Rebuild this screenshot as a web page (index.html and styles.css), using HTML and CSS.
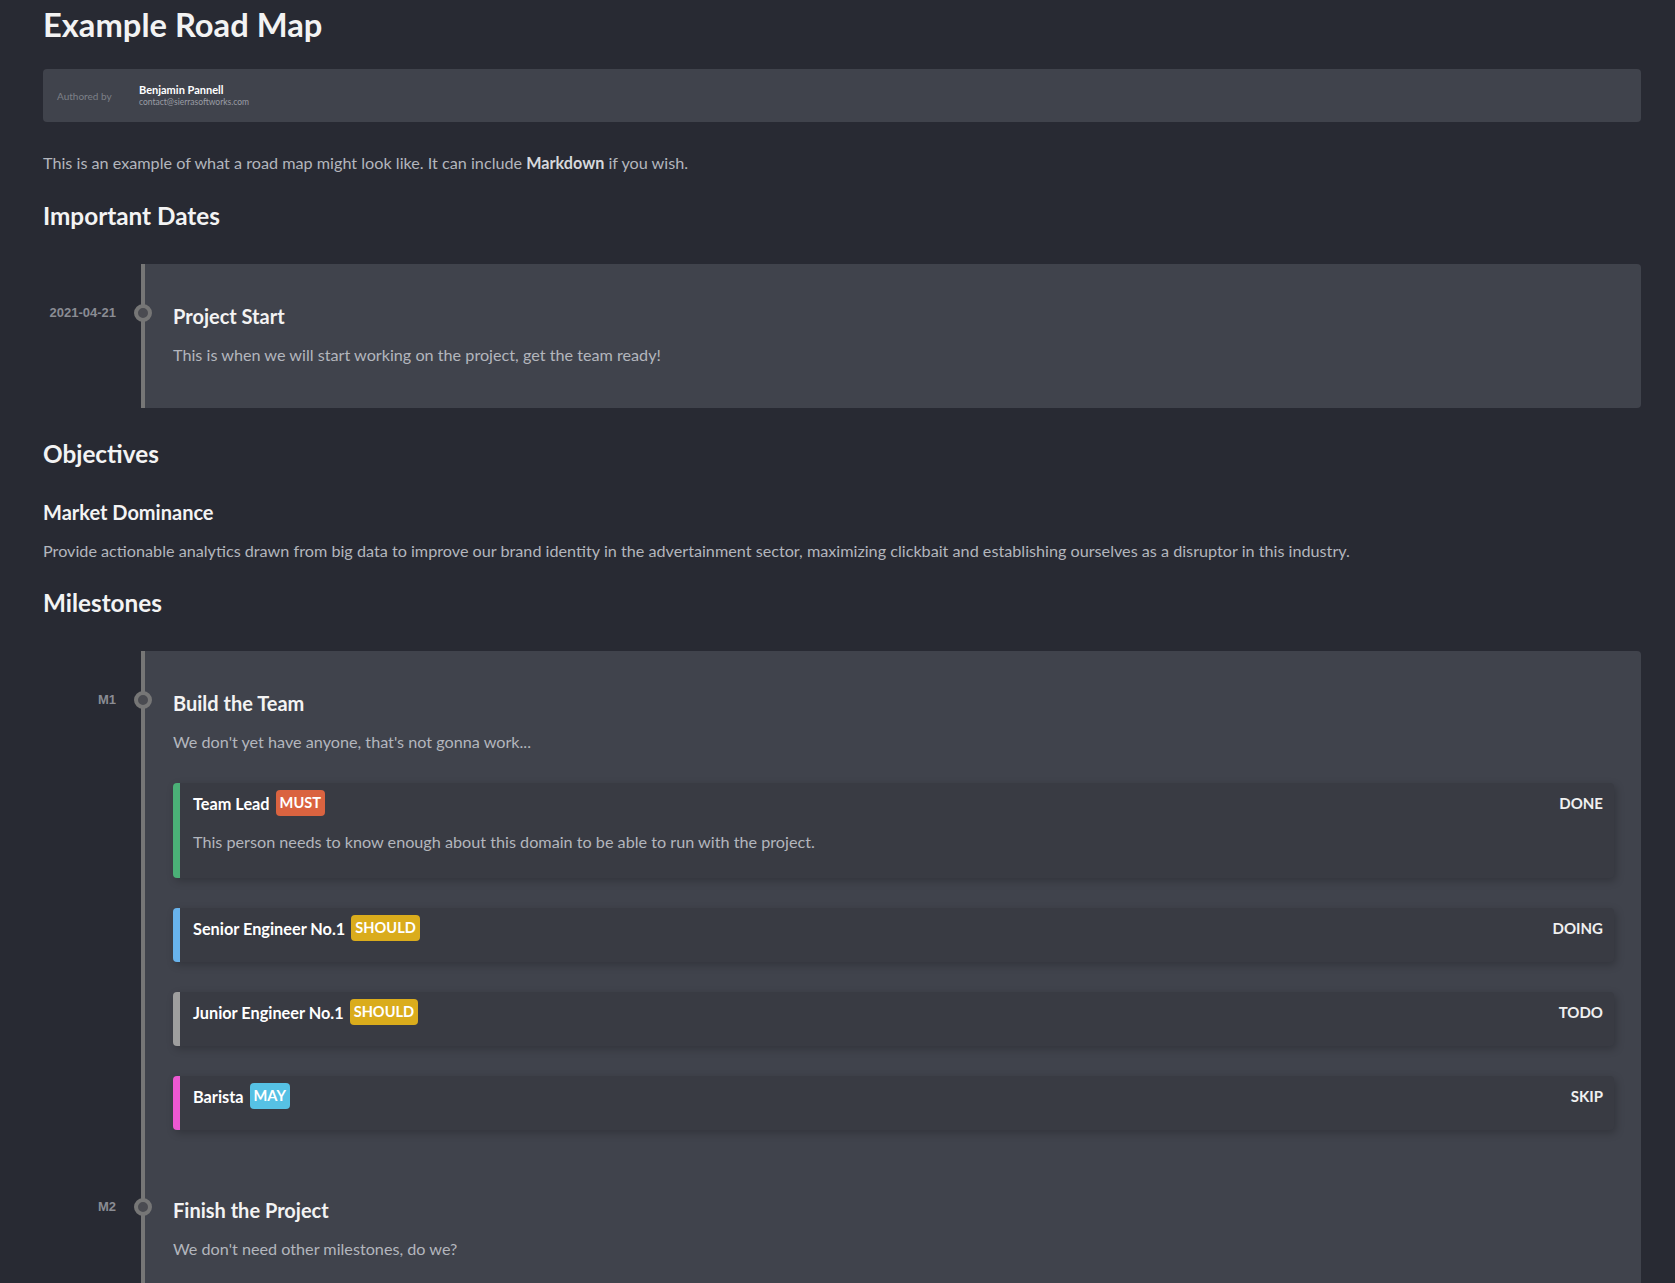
FILE: index.html
```html
<!DOCTYPE html>
<html lang="en">
<head>
<meta charset="utf-8">
<title>Example Road Map</title>
<link rel="stylesheet" href="styles.css">
</head>
<body>
<main class="page">
  <h1 class="title">Example Road Map</h1>

  <div class="authors">
    <div class="authors-label">Authored by</div>
    <div class="author">
      <div class="author-name">Benjamin Pannell</div>
      <div class="author-email">contact@sierrasoftworks.com</div>
    </div>
  </div>

  <p class="intro">This is an example of what a road map might look like. It can include <strong>Markdown</strong> if you wish.</p>

  <h2 class="section-title section-dates">Important Dates</h2>
  <section class="timeline">
    <div class="tl-item">
      <span class="tl-label">2021-04-21</span>
      <span class="tl-dot"></span>
      <h3 class="tl-title">Project Start</h3>
      <p class="tl-desc">This is when we will start working on the project, get the team ready!</p>
    </div>
  </section>

  <h2 class="section-title section-objectives">Objectives</h2>
  <h3 class="objective-title">Market Dominance</h3>
  <p class="objective-desc">Provide actionable analytics drawn from big data to improve our brand identity in the advertainment sector, maximizing clickbait and establishing ourselves as a disruptor in this industry.</p>

  <h2 class="section-title section-milestones">Milestones</h2>
  <section class="timeline">
    <div class="tl-item">
      <span class="tl-label">M1</span>
      <span class="tl-dot"></span>
      <h3 class="tl-title">Build the Team</h3>
      <p class="tl-desc">We don't yet have anyone, that's not gonna work...</p>
      <div class="tasks">
        <div class="task task-done">
          <div class="task-head">
            <div class="task-name">Team Lead <span class="badge badge-must">MUST</span></div>
            <div class="status">DONE</div>
          </div>
          <p class="task-desc">This person needs to know enough about this domain to be able to run with the project.</p>
        </div>
        <div class="task task-doing">
          <div class="task-head">
            <div class="task-name">Senior Engineer No.1 <span class="badge badge-should">SHOULD</span></div>
            <div class="status">DOING</div>
          </div>
        </div>
        <div class="task task-todo">
          <div class="task-head">
            <div class="task-name">Junior Engineer No.1 <span class="badge badge-should">SHOULD</span></div>
            <div class="status">TODO</div>
          </div>
        </div>
        <div class="task task-skip">
          <div class="task-head">
            <div class="task-name">Barista <span class="badge badge-may">MAY</span></div>
            <div class="status">SKIP</div>
          </div>
        </div>
      </div>
    </div>
    <div class="tl-item">
      <span class="tl-label">M2</span>
      <span class="tl-dot"></span>
      <h3 class="tl-title">Finish the Project</h3>
      <p class="tl-desc">We don't need other milestones, do we?</p>
    </div>
  </section>
</main>
</body>
</html>
```

FILE: styles.css
```css
* {
  box-sizing: border-box;
}

html,
body {
  margin: 0;
  background: #282a33;
}

body {
  font-family: Lato, "Segoe UI", "Noto Sans", sans-serif;
  font-size: 16.2px;
  color: #b3b6bd;
}

.page {
  padding: 0 34px 60px 43px;
}

.title {
  margin: 0;
  height: 50px;
  line-height: 50px;
  font-size: 32.7px;
  font-weight: 700;
  color: #f3f3f3;
}

.authors {
  margin-top: 19px;
  height: 53px;
  background: #40434c;
  border-radius: 4px;
  display: flex;
  align-items: center;
  padding-left: 14px;
}

.authors-label {
  width: 82px;
  font-size: 10px;
  color: #7d8088;
}

.author-name {
  font-size: 11px;
  line-height: 13px;
  font-weight: 700;
  color: #ffffff;
}

.author-email {
  font-size: 8.5px;
  line-height: 12px;
  color: #9a9da5;
}

.intro {
  margin: 29px 0 0;
  line-height: 24px;
}

.intro strong {
  color: #d6d8dc;
}

.section-title {
  margin: 0;
  font-size: 24.3px;
  line-height: 30px;
  font-weight: 700;
  color: #f3f3f3;
}

.section-dates {
  margin-top: 26px;
}

.section-objectives {
  margin-top: 31px;
}

.section-milestones {
  margin-top: 25px;
}

.objective-title {
  margin: 30px 0 0;
  font-size: 20px;
  line-height: 26px;
  font-weight: 700;
  color: #f3f3f3;
}

.objective-desc {
  margin: 14px 0 0;
  line-height: 24px;
}

.timeline {
  margin: 33px 0 0 98px;
  border-left: 4px solid #767676;
  background: #40434c;
  border-radius: 0 4px 4px 0;
  padding-bottom: 13px;
}

.tl-item {
  position: relative;
  padding: 39px 27px 28px 28px;
}

.tl-label {
  position: absolute;
  right: calc(100% + 29px);
  top: 41px;
  font-family: "Liberation Sans", Arial, sans-serif;
  font-weight: 700;
  font-size: 13px;
  line-height: 15px;
  color: #8a8c93;
  white-space: nowrap;
}

.tl-dot {
  position: absolute;
  left: -11px;
  top: 40px;
  width: 18px;
  height: 18px;
  border-radius: 50%;
  border: 4px solid #767676;
  background: #4a4b51;
}

.tl-title {
  margin: 0;
  font-size: 20px;
  line-height: 26px;
  font-weight: 700;
  color: #f3f3f3;
}

.tl-desc {
  margin: 14px 0 0;
  line-height: 24px;
}

.tasks {
  margin-top: 29px;
  display: flex;
  flex-direction: column;
  gap: 30px;
}

.task {
  background: #393b43;
  border-left: 7px solid #9e9e9e;
  border-radius: 4px;
  padding: 7px 11px 21px 13px;
  box-shadow: 2px 3px 8px rgba(0, 0, 0, 0.22);
}

.task-done {
  border-left-color: #4bb077;
}

.task-doing {
  border-left-color: #68b3ec;
}

.task-todo {
  border-left-color: #9e9e9e;
}

.task-skip {
  border-left-color: #ee58d2;
}

.task-head {
  display: flex;
  align-items: center;
  justify-content: space-between;
  height: 26px;
}

.task-name {
  display: flex;
  align-items: center;
  font-weight: 700;
  font-size: 16.3px;
  color: #ffffff;
}

.badge {
  margin-left: 6px;
  padding: 0 4px;
  height: 26px;
  line-height: 26px;
  border-radius: 4px;
  font-weight: 700;
  font-size: 14.6px;
  color: #ffffff;
}

.badge-must {
  background: #da6340;
}

.badge-should {
  background: #daac1c;
}

.badge-may {
  background: #56c1e4;
}

.status {
  font-weight: 700;
  font-size: 15px;
  color: #f0f0f0;
}

.task-desc {
  margin: 14px 0 3px;
  line-height: 24px;
}
```
